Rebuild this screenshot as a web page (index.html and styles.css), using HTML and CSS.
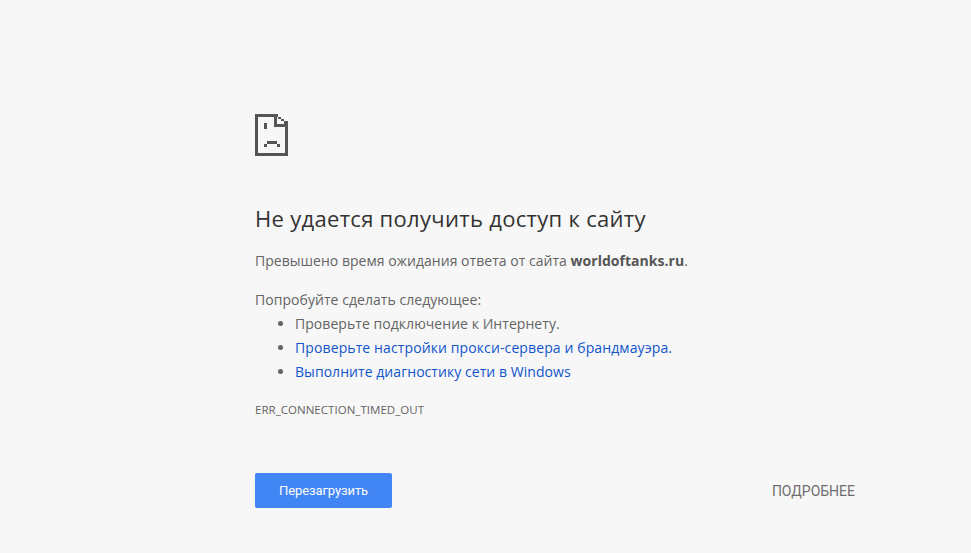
FILE: index.html
```html
<!DOCTYPE html>
<html lang="ru">
<head>
<meta charset="utf-8">
<title>worldoftanks.ru</title>
<link rel="stylesheet" href="styles.css">
</head>
<body>
<main class="page">
  <svg class="icon" width="33" height="42" viewBox="0 0 33 42" shape-rendering="crispEdges" aria-hidden="true">
    <path fill="#555" d="M0 0H23V3H3V39H30V13H33V42H0Z M19 3H22V10H33V13H19Z M23 3H26V5H23Z M26 5H29V7H26Z M29 7H33V10H29Z M9 9H12V15H9Z M12 27H22V30H12Z M9 30H12V33H9Z M22 30H25V33H22Z"/>
  </svg>
  <h1 class="title">Не удается получить доступ к сайту</h1>
  <p class="summary">Превышено время ожидания ответа от сайта <strong>worldoftanks.ru</strong>.</p>
  <p class="try">Попробуйте сделать следующее:</p>
  <ul class="suggestions">
    <li>Проверьте подключение к Интернету.</li>
    <li><a class="link-wide" href="#">Проверьте настройки прокси-сервера и брандмауэра.</a></li>
    <li><a href="#">Выполните диагностику сети в Windows</a></li>
  </ul>
  <div class="code">ERR_CONNECTION_TIMED_OUT</div>
  <div class="actions">
    <button class="reload" type="button">Перезагрузить</button>
    <button class="details" type="button">ПОДРОБНЕЕ</button>
  </div>
</main>
</body>
</html>
```
FILE: styles.css
```css
html, body { margin: 0; padding: 0; height: 100%; }
body {
  background: #f7f7f7;
  color: #646464;
  font-family: "Open Sans", "Noto Sans", sans-serif;
  font-size: 14px;
  overflow: hidden;
}
.page {
  box-sizing: border-box;
  width: 600px;
  margin-left: 255px;
  padding-top: 114px;
  display: flex;
  flex-direction: column;
  align-items: flex-start;
}
.icon { display: block; }
.title {
  margin: 46px 0 0;
  color: #333;
  font-size: 22px;
  font-weight: 400;
  line-height: 32px;
  letter-spacing: 0.3px;
}
.summary { margin: 15px 0 0; line-height: 24px; letter-spacing: 0.03px; }
.try { margin: 15px 0 0; line-height: 24px; letter-spacing: 0.05px; }
.summary strong { font-weight: 700; color: #555; }
.suggestions {
  margin: 0;
  padding-left: 40px;
  line-height: 24px;
  letter-spacing: 0.05px;
}
.suggestions a { color: #1155cc; text-decoration: none; }
.suggestions a.link-wide { letter-spacing: 0.11px; }
.code {
  margin-top: 18px;
  font-size: 11.5px;
  line-height: 16px;
  letter-spacing: 0.03px;
}
.actions {
  width: 600px;
  margin-top: 55px;
  display: flex;
  justify-content: space-between;
  align-items: center;
}
.reload {
  width: 137px;
  height: 35px;
  padding: 0;
  border: 0;
  border-radius: 2px;
  background: #4285f4;
  color: #fff;
  font-family: Roboto, sans-serif;
  font-size: 13px;
  font-weight: 400;
  letter-spacing: -0.1px;
}
.details {
  padding: 0;
  border: 0;
  background: none;
  color: #6e6e6e;
  font-family: Roboto, sans-serif;
  font-size: 14px;
}
```
